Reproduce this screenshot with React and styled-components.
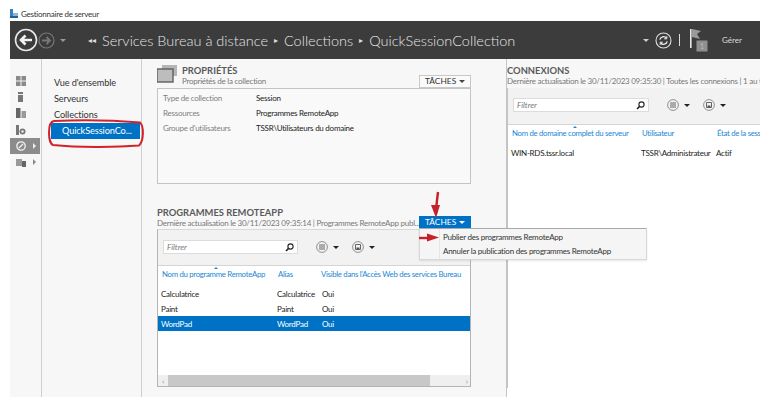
import React from 'react';
import styled, { createGlobalStyle } from 'styled-components';

const GlobalStyle = createGlobalStyle`
  html, body {
    margin: 0;
    padding: 0;
    background: #fff;
    font-family: Lato, "Open Sans", sans-serif;
    overflow: hidden;
  }
  * { box-sizing: border-box; }
`;

const Page = styled.div`
  position: relative;
  width: 770px;
  height: 407px;
  padding: 0 10px 10px;
  display: flex;
  flex-direction: column;
`;

const TitleBar = styled.div`
  height: 21px;
  display: flex;
  align-items: center;
  gap: 3px;
  font-size: 8px;
  letter-spacing: -0.25px;
  color: #333;
  padding-top: 6px;
`;

const DarkBar = styled.div`
  height: 38px;
  background: #3c3c3c;
  display: flex;
  align-items: center;
  color: #e6e6e6;
`;

const NavGroup = styled.div`
  display: flex;
  align-items: center;
  width: 78px;
  padding-left: 4px;
`;

const Crumbs = styled.div`
  display: flex;
  align-items: center;
  flex: 1;
  font-size: 14.5px;
  font-weight: 300;
  white-space: nowrap;
`;

const CrumbSep = styled.span`
  font-size: 8px;
  margin: ${(p) => p.$margin || '0 6px'};
  color: #ddd;
`;

const BarRight = styled.div`
  display: flex;
  align-items: center;
  width: 115px;
  margin-right: 2px;
`;

const Caret = styled.span`
  width: 0;
  height: 0;
  border-left: 3px solid transparent;
  border-right: 3px solid transparent;
  border-top: 3px solid ${(p) => p.$color || '#ccc'};
  display: inline-block;
  margin: ${(p) => p.$margin || '0'};
`;

const Pipe = styled.span`
  width: 1px;
  height: 12px;
  background: #ddd;
  margin: 0 10px 0 7px;
`;

const Manage = styled.span`
  font-size: 8px;
  margin-left: 14px;
  color: #ddd;
`;

const Main = styled.div`
  flex: 1;
  display: flex;
  min-height: 0;
  background: #f7f7f7;
`;

const IconRail = styled.div`
  width: 32px;
  padding-top: 14px;
  border-right: 1px solid #cfcfcf;
  display: flex;
  flex-direction: column;
`;

const RailItem = styled.div`
  height: 16.2px;
  display: flex;
  align-items: center;
  padding-left: 6px;
  gap: 7px;
  background: ${(p) => (p.$active ? '#8c8c8c' : 'transparent')};
  margin-right: 1px;
`;

const SideNav = styled.div`
  width: 100px;
  border-right: 1px solid #cfcfcf;
  padding-top: 16px;
  display: flex;
  flex-direction: column;
  align-items: flex-start;
`;

const NavItem = styled.div`
  height: 16px;
  line-height: 16px;
  width: 89px;
  margin-left: 9px;
  padding-left: ${(p) => (p.$active ? '11px' : '3px')};
  font-size: 9.2px;
  letter-spacing: -0.1px;
  color: ${(p) => (p.$active ? '#fff' : '#333')};
  background: ${(p) => (p.$active ? '#0072c6' : 'transparent')};
`;

const Center = styled.div`
  width: 365px;
  border-right: 1px solid #c4c4c4;
  padding: 6px 35px 0 15px;
  display: flex;
  flex-direction: column;
`;

const SectionHead = styled.div`
  display: flex;
  align-items: flex-start;
  gap: ${(p) => p.$gap || '5px'};
  height: ${(p) => p.$height || '23px'};
  position: relative;
`;

const HeadText = styled.div`
  flex: 1;
  min-width: 0;
`;

const Heading = styled.div`
  font-size: 9.4px;
  font-weight: 700;
  line-height: 11px;
  color: #5a5a5a;
`;

const SubHeading = styled.div`
  font-size: 8px;
  letter-spacing: -0.25px;
  line-height: 11px;
  color: #777;
  white-space: nowrap;
  overflow: hidden;
`;

const TasksButton = styled.div`
  width: 52px;
  height: 13px;
  margin-top: ${(p) => p.$top || '0'};
  border: 1px solid ${(p) => (p.$active ? '#0072c6' : '#c8c8c8')};
  background: ${(p) => (p.$active ? '#0072c6' : '#fafafa')};
  color: ${(p) => (p.$active ? '#fff' : '#333')};
  font-size: 8.4px;
  line-height: 11px;
  padding-left: 5px;
  display: flex;
  align-items: center;
  justify-content: space-between;
  padding-right: 5px;
  flex-shrink: 0;
`;

const PropsBox = styled.div`
  height: 96px;
  border: 1px solid #c4c4c4;
  padding: 2px 0 0 5px;
  background: #f9f9f9;
`;

const PropRow = styled.div`
  display: grid;
  grid-template-columns: 93px 1fr;
  height: 15px;
  line-height: 15px;
  font-size: 8px;
  letter-spacing: -0.25px;
  color: #222;
`;

const PropLabel = styled.span`
  color: #808080;
`;

const ProgramsSection = styled.div`
  margin-top: 23px;
  display: flex;
  flex-direction: column;
  flex: 1;
  padding-bottom: 10px;
`;

const ListPanel = styled.div`
  flex: 1;
  display: flex;
  flex-direction: column;
  border: 1px solid #b4b4b4;
  border-top-color: #d8d8d8;
  background: #fff;
`;

const Toolbar = styled.div`
  height: ${(p) => p.$height || '36px'};
  background: #f2f2f2;
  border-bottom: 1px solid #d4d4d4;
  display: flex;
  align-items: flex-start;
  padding: 10px 0 0 5px;
`;

const FilterBox = styled.div`
  width: ${(p) => p.$width || '135px'};
  height: 14px;
  background: #fff;
  border: 1px solid #dcdcdc;
  display: flex;
  align-items: center;
  justify-content: space-between;
  padding: 0 3px;
  font-size: 8px;
  font-style: italic;
  color: #777;
`;

const ToolIcon = styled.div`
  display: flex;
  align-items: center;
  gap: 5px;
  height: 14px;
  margin-left: ${(p) => p.$left || '18px'};
`;

const HeaderRow = styled.div`
  position: relative;
  display: grid;
  grid-template-columns: ${(p) => p.$cols};
  height: ${(p) => p.$height || '16px'};
  align-items: center;
  font-size: 7.8px;
  letter-spacing: -0.3px;
  color: #1b87d6;
  white-space: nowrap;
  overflow: hidden;
`;

const HeaderCell = styled.span`
  padding-left: ${(p) => p.$pad || '4px'};
  overflow: hidden;
  line-height: 14px;
`;

const SortMark = styled.span`
  position: absolute;
  left: ${(p) => p.$left};
  top: 1px;
  width: 0;
  height: 0;
  border-left: 2px solid transparent;
  border-right: 2px solid transparent;
  border-bottom: 2px solid #1b87d6;
`;

const Rows = styled.div`
  flex: 1;
  padding-top: ${(p) => p.$top || '0'};
`;

const DataRow = styled.div`
  display: grid;
  grid-template-columns: ${(p) => p.$cols};
  height: 15px;
  align-items: center;
  font-size: 8px;
  letter-spacing: -0.25px;
  white-space: nowrap;
  color: ${(p) => (p.$selected ? '#fff' : '#222')};
  background: ${(p) => (p.$selected ? '#0072c6' : 'transparent')};
`;

const DataCell = styled.span`
  padding-left: 3px;
`;

const ScrollBar = styled.div`
  height: 11px;
  background: #efefef;
  display: flex;
  align-items: center;
  font-size: 8px;
  color: #888;
  justify-content: space-between;
  padding: 0 2px 0 4px;
  position: relative;
`;

const ScrollThumb = styled.div`
  position: absolute;
  left: 10px;
  top: 0;
  bottom: 0;
  width: 262px;
  background: #c8c8c8;
`;

const RightPane = styled.div`
  flex: 1;
  min-width: 0;
  background: #fff;
  display: flex;
  flex-direction: column;
  overflow: hidden;
`;

const RightHead = styled.div`
  height: 29px;
  padding-top: 6px;
  background: #f7f7f7;
  white-space: nowrap;
`;

const RightPanel = styled.div`
  height: 300px;
  border-left: 1px solid #c4c4c4;
  display: flex;
  flex-direction: column;
`;

/* callouts that lie over the page */
const Menu = styled.div`
  position: absolute;
  left: 419px;
  top: 228px;
  width: 228px;
  height: 32px;
  background: #f5f5f5;
  border: 1px solid #d8d8d8;
  border-top: 1px solid #aaa;
  box-shadow: 0 1px 2px rgba(0, 0, 0, 0.1);
  padding: 1px 0 0 23px;
  font-size: 8px;
  letter-spacing: -0.25px;
  color: #333;
  white-space: nowrap;
`;

const MenuItem = styled.div`
  height: 14px;
  line-height: 14px;
`;

const Gutter = styled.span`
  position: absolute;
  left: 19px;
  top: 0;
  bottom: 0;
  width: 1px;
  background: #e6e6e6;
`;

const Overlay = styled.svg`
  position: absolute;
  left: 0;
  top: 0;
  pointer-events: none;
`;

const Glyph = styled.svg`
  display: block;
  flex-shrink: 0;
`;

const BackIcon = () => (
  <Glyph width="24" height="24" viewBox="0 0 24 24" fill="none">
    <circle cx="12" cy="12" r="10.5" stroke="#e8e8e8" strokeWidth="1.6" />
    <path d="M18 12H7M11.5 7.5L7 12l4.5 4.5" stroke="#f2f2f2" strokeWidth="2.6" />
  </Glyph>
);

const ForwardIcon = () => (
  <Glyph width="17" height="17" viewBox="0 0 17 17" fill="none">
    <circle cx="8.5" cy="8.5" r="7.5" stroke="#777" strokeWidth="1.2" />
    <path d="M4 8.5h8M8.5 5l3.5 3.5L8.5 12" stroke="#777" strokeWidth="1.8" />
  </Glyph>
);

const RefreshIcon = () => (
  <Glyph width="17" height="17" viewBox="0 0 17 17" fill="none">
    <circle cx="8.5" cy="8.5" r="7.5" stroke="#ddd" strokeWidth="1.1" />
    <path d="M4.8 7.6a3.8 3.8 0 0 1 6.6-1.6M12.2 9.4a3.8 3.8 0 0 1-6.6 1.6" stroke="#eee" strokeWidth="1.3" />
    <path d="M11.8 4.2v2.6H9.2M5.2 12.8v-2.6h2.6" stroke="#eee" strokeWidth="1" />
  </Glyph>
);

const FlagIcon = () => (
  <Glyph width="18" height="23" viewBox="0 0 18 23">
    <rect x="0" y="0" width="1.6" height="19" fill="#e8e8e8" />
    <path d="M2 0l9 2-4 3 3 5-8-2z" fill="#9a9a9a" />
    <rect x="6.5" y="11.5" width="11" height="11" fill="#8f8f8f" />
    <text x="12" y="20" fontSize="7" fill="#bbb" textAnchor="middle">1</text>
  </Glyph>
);

const AppIcon = () => (
  <Glyph width="8" height="9" viewBox="0 0 8 9">
    <rect x="0" y="0" width="3" height="8" fill="#3b7fc0" />
    <rect x="3" y="4" width="5" height="4" fill="#8cb7dc" />
    <rect x="0" y="7" width="8" height="2" fill="#1f5f9c" />
  </Glyph>
);

const SearchIcon = () => (
  <Glyph width="9" height="9" viewBox="0 0 9 9" fill="none">
    <circle cx="5.5" cy="3.5" r="2.6" stroke="#222" strokeWidth="1.1" />
    <path d="M3.6 5.4L1 8" stroke="#222" strokeWidth="1.5" />
  </Glyph>
);

const ListIcon = () => (
  <Glyph width="12" height="12" viewBox="0 0 12 12" fill="none">
    <circle cx="6" cy="6" r="5.4" stroke="#777" strokeWidth="0.8" />
    <path d="M3 4h6M3 6h6M3 8h6" stroke="#555" strokeWidth="0.9" />
  </Glyph>
);

const SaveIcon = () => (
  <Glyph width="12" height="12" viewBox="0 0 12 12" fill="none">
    <circle cx="6" cy="6" r="5.4" stroke="#777" strokeWidth="0.8" />
    <path d="M3.5 3.5h5v5h-5z" stroke="#555" strokeWidth="0.9" />
    <path d="M4.5 6.5h3v2h-3z" fill="#555" />
  </Glyph>
);

const SectionIcon = () => (
  <Glyph width="20" height="18" viewBox="0 0 20 18">
    <rect x="5" y="0" width="15" height="11" fill="#b5b5b5" />
    <rect x="0" y="4" width="16" height="13" fill="#bdbdbd" stroke="#5e5e5e" strokeWidth="1.4" />
  </Glyph>
);

const railIcons = {
  dashboard: (
    <Glyph width="10" height="10" viewBox="0 0 10 10">
      <path d="M0 0h10v10H0z" fill="#8a8a8a" />
      <path d="M4.5 0h1v10h-1zM0 4.5h10v1H0z" fill="#f2f2f2" />
    </Glyph>
  ),
  server: (
    <Glyph width="10" height="10" viewBox="0 0 10 10">
      <path d="M2 0h5v10H2z" fill="#777" />
      <path d="M2 2h5v1H2z" fill="#eee" />
    </Glyph>
  ),
  servers: (
    <Glyph width="10" height="10" viewBox="0 0 10 10">
      <path d="M0 0h4.5v10H0z" fill="#666" />
      <path d="M5.5 3H10v7H5.5z" fill="#999" />
    </Glyph>
  ),
  files: (
    <Glyph width="10" height="10" viewBox="0 0 10 10">
      <path d="M0 0h3v10H0z" fill="#777" />
      <circle cx="6.5" cy="6.5" r="3" fill="#777" />
      <circle cx="6.5" cy="6.5" r="1.2" fill="#eee" />
    </Glyph>
  ),
  rds: (
    <Glyph width="10" height="10" viewBox="0 0 10 10" fill="none">
      <circle cx="5" cy="5" r="4.2" stroke="#f2f2f2" strokeWidth="1.3" />
      <path d="M3 7l4-4" stroke="#f2f2f2" strokeWidth="1.3" />
    </Glyph>
  ),
  storage: (
    <Glyph width="10" height="9" viewBox="0 0 10 9">
      <path d="M0 1h6v7H0z" fill="#999" />
      <path d="M6 3h4v6H6z" fill="#666" />
    </Glyph>
  ),
};

const Arrow = styled.span`
  width: 0;
  height: 0;
  border-top: 3px solid transparent;
  border-bottom: 3px solid transparent;
  border-left: 3px solid ${(p) => p.$color || '#888'};
`;

const propsRows = [
  ['Type de collection', 'Session'],
  ['Ressources', 'Programmes RemoteApp'],
  ["Groupe d'utilisateurs", 'TSSR\\Utilisateurs du domaine'],
];

const programCols = '116px 45px 1fr';
const programs = [
  ['Calculatrice', 'Calculatrice', 'Oui'],
  ['Paint', 'Paint', 'Oui'],
  ['WordPad', 'WordPad', 'Oui', true],
];

const connectionCols = '130px 75px 1fr';

const App = () => (
  <Page>
    <GlobalStyle />
    <TitleBar>
      <AppIcon />
      Gestionnaire de serveur
    </TitleBar>

    <DarkBar>
      <NavGroup>
        <BackIcon />
        <ForwardIcon />
        <Caret $margin="0 0 0 5px" $color="#999" />
      </NavGroup>
      <Crumbs>
        <CrumbSep $margin="0 6px 0 0">◂◂</CrumbSep>
        Services Bureau à distance
        <CrumbSep>▸</CrumbSep>
        Collections
        <CrumbSep>▸</CrumbSep>
        QuickSessionCollection
      </Crumbs>
      <BarRight>
        <Caret $margin="0 6px 0 0" />
        <RefreshIcon />
        <Pipe />
        <FlagIcon />
        <Manage>Gérer</Manage>
      </BarRight>
    </DarkBar>

    <Main>
      <IconRail>
        <RailItem>{railIcons.dashboard}</RailItem>
        <RailItem>{railIcons.server}</RailItem>
        <RailItem>{railIcons.servers}</RailItem>
        <RailItem>{railIcons.files}</RailItem>
        <RailItem $active>
          {railIcons.rds}
          <Arrow $color="#eee" />
        </RailItem>
        <RailItem>
          {railIcons.storage}
          <Arrow />
        </RailItem>
      </IconRail>

      <SideNav>
        <NavItem>Vue d'ensemble</NavItem>
        <NavItem>Serveurs</NavItem>
        <NavItem>Collections</NavItem>
        <NavItem $active>QuickSessionCo...</NavItem>
      </SideNav>

      <Center>
        <SectionHead>
          <SectionIcon />
          <HeadText>
            <Heading>PROPRIÉTÉS</Heading>
            <SubHeading>Propriétés de la collection</SubHeading>
          </HeadText>
          <TasksButton $top="10px">
            TÂCHES
            <Caret $color="#444" />
          </TasksButton>
        </SectionHead>
        <PropsBox>
          {propsRows.map(([label, value]) => (
            <PropRow key={label}>
              <PropLabel>{label}</PropLabel>
              <span>{value}</span>
            </PropRow>
          ))}
        </PropsBox>

        <ProgramsSection>
          <SectionHead $height="22px" $gap="0">
            <HeadText>
              <Heading>PROGRAMMES REMOTEAPP</Heading>
              <SubHeading>Dernière actualisation le 30/11/2023 09:35:14 | Programmes RemoteApp publ...</SubHeading>
            </HeadText>
            <TasksButton $top="9px" $active>
              TÂCHES
              <Caret $color="#fff" />
            </TasksButton>
          </SectionHead>
          <ListPanel>
            <Toolbar>
              <FilterBox>
                Filtrer
                <SearchIcon />
              </FilterBox>
              <ToolIcon>
                <ListIcon />
                <Caret $color="#222" />
              </ToolIcon>
              <ToolIcon $left="13px">
                <SaveIcon />
                <Caret $color="#222" />
              </ToolIcon>
            </Toolbar>
            <HeaderRow $cols={programCols}>
              <HeaderCell>Nom du programme RemoteApp</HeaderCell>
              <HeaderCell>Alias</HeaderCell>
              <HeaderCell $pad="2px">Visible dans l'Accès Web des services Bureau</HeaderCell>
              <SortMark $left="56px" />
            </HeaderRow>
            <Rows $top="4px">
              {programs.map(([name, alias, visible, selected]) => (
                <DataRow key={name} $cols={programCols} $selected={selected}>
                  <DataCell>{name}</DataCell>
                  <DataCell>{alias}</DataCell>
                  <DataCell>{visible}</DataCell>
                </DataRow>
              ))}
            </Rows>
            <ScrollBar>
              ‹<ScrollThumb />›
            </ScrollBar>
          </ListPanel>
        </ProgramsSection>
      </Center>

      <RightPane>
        <RightHead>
          <Heading>CONNEXIONS</Heading>
          <SubHeading>Dernière actualisation le 30/11/2023 09:35:30 | Toutes les connexions | 1 au total</SubHeading>
        </RightHead>
        <RightPanel>
          <Toolbar $height="37px">
            <FilterBox $width="136px">
              Filtrer
              <SearchIcon />
            </FilterBox>
            <ToolIcon>
              <ListIcon />
              <Caret $color="#222" />
            </ToolIcon>
            <ToolIcon $left="13px">
              <SaveIcon />
              <Caret $color="#222" />
            </ToolIcon>
          </Toolbar>
          <HeaderRow $cols={connectionCols} $height="15px">
            <HeaderCell>Nom de domaine complet du serveur</HeaderCell>
            <HeaderCell>Utilisateur</HeaderCell>
            <HeaderCell>État de la session</HeaderCell>
            <SortMark $left="65px" />
          </HeaderRow>
          <Rows $top="5px">
            <DataRow $cols={connectionCols}>
              <DataCell>WIN-RDS.tssr.local</DataCell>
              <DataCell>TSSR\Administrateur</DataCell>
              <DataCell>Actif</DataCell>
            </DataRow>
          </Rows>
        </RightPanel>
      </RightPane>
    </Main>

    <Menu>
      <Gutter />
      <MenuItem>Publier des programmes RemoteApp</MenuItem>
      <MenuItem>Annuler la publication des programmes RemoteApp</MenuItem>
    </Menu>

    <Overlay width="770" height="407" viewBox="0 0 770 407" fill="none">
      <path
        d="M54 121C47 122 48 143 53 145C80 148 120 147 139 145.5C144 141 144 126 140 122.5C110 120 75 120 54 121Z"
        stroke="#d3232a"
        strokeWidth="2"
      />
      <path d="M438 192C437 200 436 208 436 213" stroke="#c8202a" strokeWidth="2.4" />
      <path d="M431 205L436 218L440 205Z" fill="#c8202a" />
      <path d="M419 238L431 238" stroke="#c8202a" strokeWidth="2.4" />
      <path d="M427 233.5L439 237.5L427 241.5Z" fill="#c8202a" />
    </Overlay>
  </Page>
);

export default App;
